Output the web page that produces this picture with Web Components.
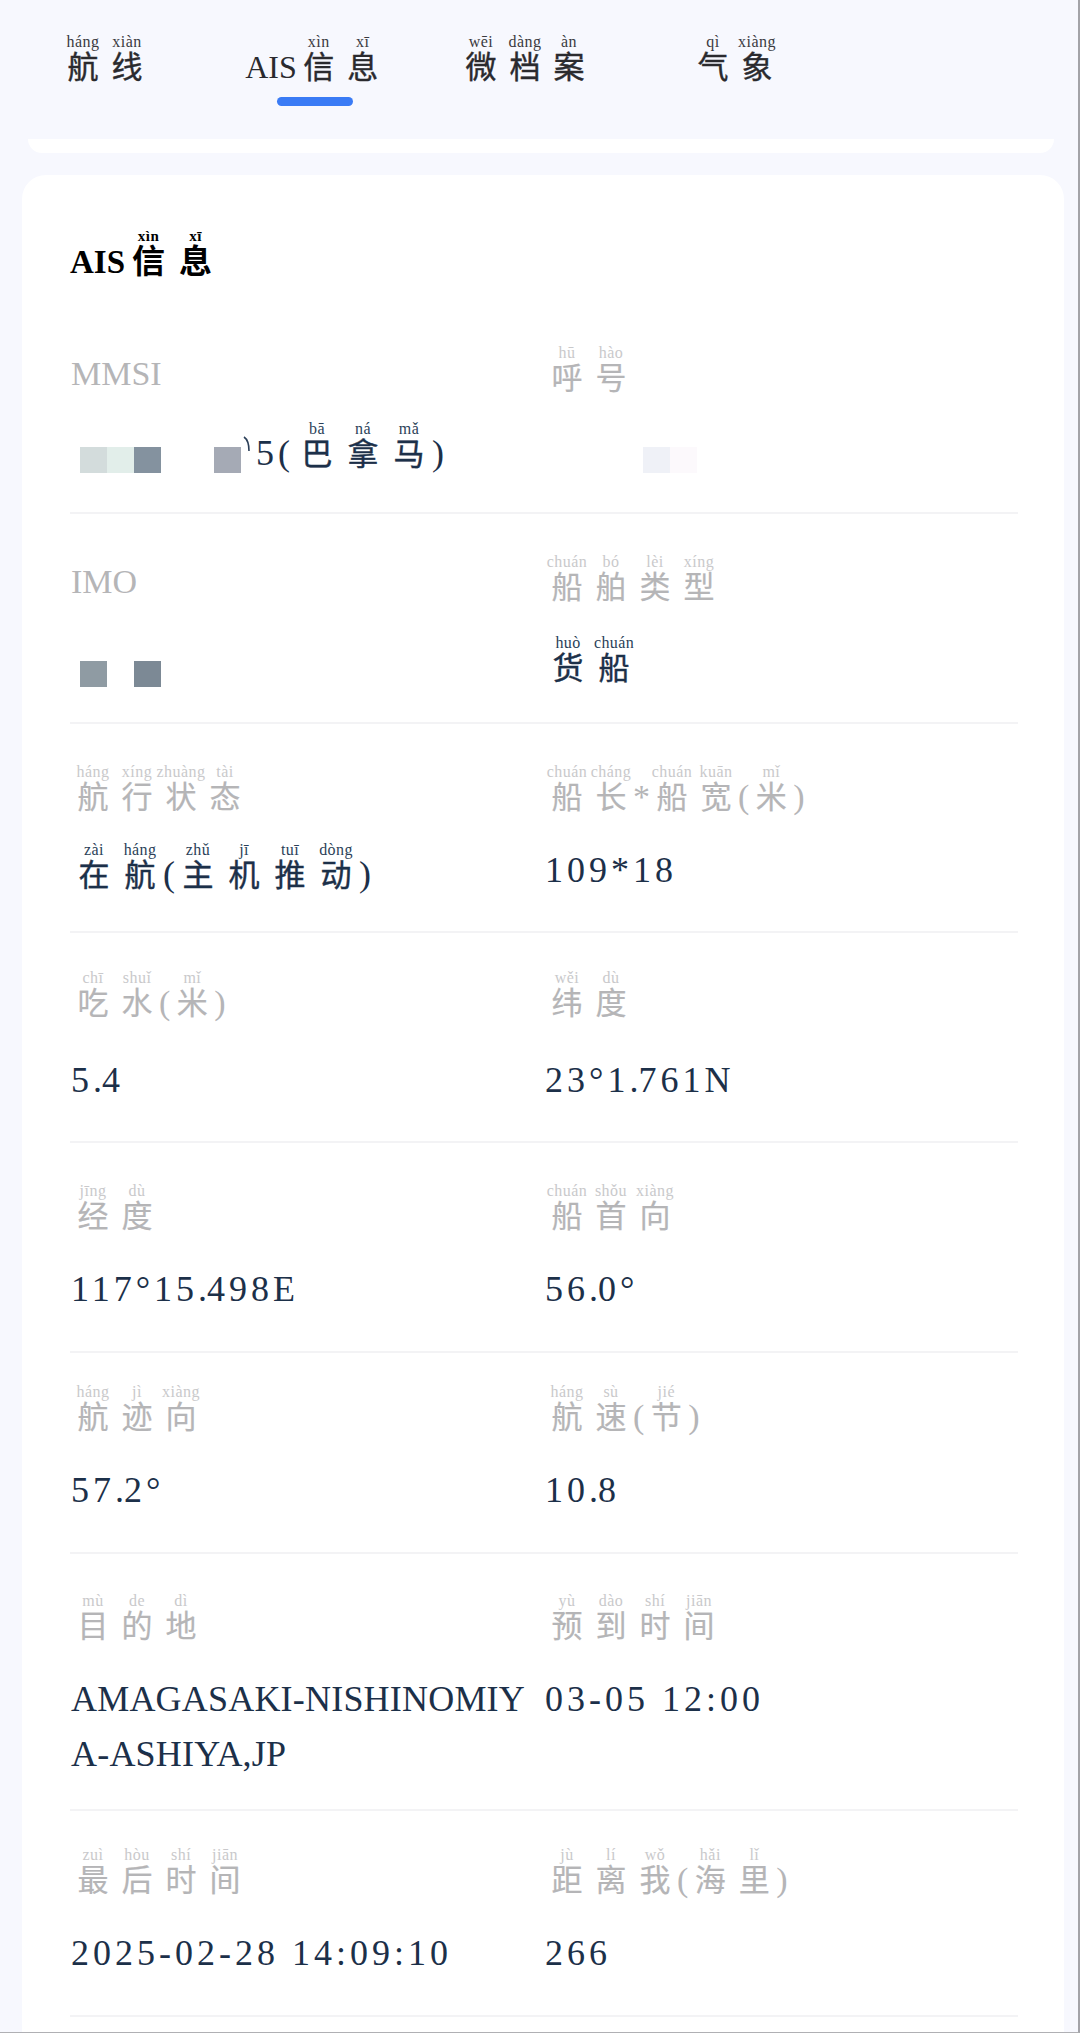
<!DOCTYPE html>
<html lang="zh"><head><meta charset="utf-8"><title>AIS</title>
<style>
html,body{margin:0;padding:0;background:#f7f8fe}
body{width:1080px;height:2033px;overflow:hidden;box-sizing:border-box;border-right:2px solid #a3a3a8;border-bottom:1px solid #b0b0b4;font-family:"Liberation Serif","Noto Sans CJK SC",serif}
</style></head><body>
<ais-page>
<tab-bar>
  <tab-item text="航:háng 线:xiàn"></tab-item>
  <tab-item active text="AIS 信:xìn 息:xī"></tab-item>
  <tab-item text="微:wēi 档:dàng 案:àn"></tab-item>
  <tab-item text="气:qì 象:xiàng"></tab-item>
</tab-bar>
<sliver-card></sliver-card>
<info-card title-text="AIS 信:xìn 息:xī">
  <ais-row style="--h:208px">
    <ais-field label="MMSI" value="5( 巴:bā 拿:ná 马:mǎ )" style="--vpad:185px;--lt:26px;--vt:32px"><mosaic-patch style="--x:10px;--y:141px;--c:#d3dcdc"></mosaic-patch><mosaic-patch style="--x:37px;--y:141px;--c:#e2eeea"></mosaic-patch><mosaic-patch style="--x:64px;--y:141px;--c:#84929f"></mosaic-patch><mosaic-patch style="--x:144px;--y:141px;--c:#a5aab5"></mosaic-patch><digit-scrap></digit-scrap></ais-field>
    <ais-field label="呼:hū 号:hào" value="&nbsp;" style="--lt:30px;--vt:26px"><mosaic-patch style="--x:99px;--y:141px;--c:#eff1f7"></mosaic-patch><mosaic-patch style="--x:126px;--y:141px;--c:#fcf9fc"></mosaic-patch></ais-field>
  </ais-row>
  <ais-row style="--h:210px">
    <ais-field label="IMO" value="&nbsp;" style="--lt:26px"><mosaic-patch style="--x:10px;--y:147px;--c:#8f9ba3"></mosaic-patch><mosaic-patch style="--x:64px;--y:147px;--c:#7c8995"></mosaic-patch></ais-field>
    <ais-field label="船:chuán 舶:bó 类:lèi 型:xíng" value="货:huò 船:chuán" style="--lt:31px;--vt:33px"></ais-field>
  </ais-row>
  <ais-row style="--h:209px">
    <ais-field label="航:háng 行:xíng 状:zhuàng 态:tài" value="在:zài 航:háng ( 主:zhǔ 机:jī 推:tuī 动:dòng )" style="--lt:31px;--vt:30px"></ais-field>
    <ais-field label="船:chuán 长:cháng * 船:chuán 宽:kuān ( 米:mǐ )" value="109*18" style="--lt:31px;--vt:26px"></ais-field>
  </ais-row>
  <ais-row style="--h:210px">
    <ais-field label="吃:chī 水:shuǐ ( 米:mǐ )" value="5.4" style="--lt:28px;--vt:30px"></ais-field>
    <ais-field label="纬:wěi 度:dù" value="23°1.761N" style="--lt:28px;--vt:30px"></ais-field>
  </ais-row>
  <ais-row style="--h:210px">
    <ais-field label="经:jīng 度:dù" value="117°15.498E" style="--lt:31px;--vt:26px"></ais-field>
    <ais-field label="船:chuán 首:shǒu 向:xiàng" value="56.0°" style="--lt:31px;--vt:26px"></ais-field>
  </ais-row>
  <ais-row style="--h:201px">
    <ais-field label="航:háng 迹:jì 向:xiàng" value="57.2°" style="--lt:22px;--vt:26px"></ais-field>
    <ais-field label="航:háng 速:sù ( 节:jié )" value="10.8" style="--lt:22px;--vt:26px"></ais-field>
  </ais-row>
  <ais-row style="--h:257px">
    <ais-field label="目:mù 的:de 地:dì" value="AMAGASAKI-NISHINOMIYA-ASHIYA,JP" style="--vls:.2px;--lt:30px;--vt:26px"></ais-field>
    <ais-field label="预:yù 到:dào 时:shí 间:jiān" value="03-05&nbsp;12:00" style="--lt:30px;--vt:26px"></ais-field>
  </ais-row>
  <ais-row style="--h:206px">
    <ais-field label="最:zuì 后:hòu 时:shí 间:jiān" value="2025-02-28&nbsp;14:09:10" style="--lt:27px;--vt:26px"></ais-field>
    <ais-field label="距:jù 离:lí 我:wǒ ( 海:hǎi 里:lǐ )" value="266" style="--lt:27px;--vt:26px"></ais-field>
  </ais-row>
</info-card>
</ais-page>
<script>
const define=(name,css,html,extra)=>{
  const t=document.createElement('template');
  t.innerHTML=`<style>${css}</style>${html}`;
  customElements.define(name,class extends HTMLElement{
    constructor(){super();this.attachShadow({mode:'open'}).appendChild(t.content.cloneNode(true));}
    connectedCallback(){extra&&extra(this,this.shadowRoot);}
  });
};
const esc=s=>s.replace(/&/g,'&amp;').replace(/</g,'&lt;');
define('py-text',`
  :host{display:inline}
  ruby{display:inline-block;position:relative;width:var(--box,44px);text-align:center;letter-spacing:0;font-size:var(--han-size,inherit);line-height:36px;-webkit-text-stroke:var(--han-stroke,0)}
  rt{display:block;position:absolute;left:50%;bottom:calc(100% - 1px);transform:translateX(-50%);white-space:nowrap;font-size:var(--rt-size,16px);letter-spacing:var(--rt-ls,.5px);color:var(--rt-color,inherit);font-weight:inherit;line-height:18px;-webkit-text-stroke:0}
  .paren,.dot{letter-spacing:0}
`,`<span id="o"></span>`,(el,root)=>{
  const tokens=(el.getAttribute('text')||'').split(' ');
  root.getElementById('o').innerHTML=tokens.map(tok=>{
    const m=tok.match(/^([\u4e00-\u9fff]):(.+)$/);
    if(m)return `<ruby>${esc(m[1])}<rt>${esc(m[2])}</rt></ruby>`;
    if(/^[()]$/.test(tok))return `<span class="paren">${esc(tok)}</span>`;
    return esc(tok).replace(/\./g,'<span class="dot">.</span>');
  }).join('');
});
define('ais-page',`:host{display:block}`,`<slot></slot>`);
define('tab-bar',`:host{display:grid;grid-template-columns:repeat(4,210px);height:139px;box-sizing:border-box;padding-top:45px;align-items:start}`,`<slot></slot>`);
define('tab-item',`
  :host{display:block;text-align:center;font-size:32px;line-height:44px;color:#2a2a2e;--rt-size:16px;--rt-color:#3a3a3e;--box:44px;--han-size:31px;--han-stroke:.4px;white-space:nowrap}
  #bar{width:76px;height:9px;border-radius:5px;background:#3a7bf5;margin:8px auto 0;visibility:hidden}
  :host([active]) #bar{visibility:visible}
`,`<div id="t"></div><div id="bar"></div>`,(el,root)=>{
  root.getElementById('t').innerHTML=`<py-text text="${el.getAttribute('text')}"></py-text>`;
});
define('sliver-card',`:host{display:block;height:14px;margin:0 24px 22px 28px;background:#fff;border-radius:0 0 14px 14px}`,``);
define('info-card',`
  :host{display:block;margin:0 14px 0 22px;background:#fff;border-radius:24px 24px 0 0;padding:0 46px 0 48px;box-sizing:border-box;height:1860px}
  h2{margin:0;height:131px;box-sizing:border-box;padding-top:60px;font-size:33px;line-height:54px;font-weight:700;color:#000;--rt-size:15px;--box:47px;--han-size:33px;--rt-color:#000;--rt-ls:.5px}
`,`<h2 id="t"></h2><slot></slot>`,(el,root)=>{
  root.getElementById('t').innerHTML=`<py-text text="${el.getAttribute('title-text')}"></py-text>`;
});
define('ais-row',`:host{display:grid;grid-template-columns:474px 1fr;height:var(--h);box-sizing:border-box;border-bottom:2px solid #f3f3f5}`,`<slot></slot>`);
define('ais-field',`
  :host{display:block;position:relative;padding-top:var(--lt,26px);padding-left:1px;min-width:0}
  #l{height:62px;display:flex;align-items:flex-end;font-size:34px;line-height:40px;color:#b5b5b7;--han-size:31px;--han-stroke:.2px;--box:44px;--rt-size:16px;--rt-color:#c9c9cb;--rt-ls:.5px;white-space:nowrap}
  #v{margin-top:var(--vt,28px);padding-left:var(--vpad,0);font-size:36px;line-height:55px;letter-spacing:var(--vls,4px);color:#1c3049;--han-size:31px;--han-stroke:.4px;--box:46px;--rt-size:16px;--rt-color:#2b3f58;--rt-ls:.4px;word-break:break-all}
`,`<div id="l"></div><div id="v"></div><slot></slot>`,(el,root)=>{
  root.getElementById('l').innerHTML=`<div><py-text text="${el.getAttribute('label')}"></py-text></div>`;
  root.getElementById('v').innerHTML=`<py-text text="${el.getAttribute('value')}"></py-text>`;
});
define('mosaic-patch',`:host{position:absolute;left:var(--x);top:var(--y);width:27px;height:26px;background:var(--c)}`,``);
define('digit-scrap',`:host{position:absolute;left:173px;top:130px;width:8px;height:16px}svg{display:block}`,`<svg width="8" height="16" viewBox="0 0 8 16"><path d="M1 1C4 3 6 8 6 15" fill="none" stroke="#2b3f58" stroke-width="1.6"/></svg>`);
</script>
</body></html>
